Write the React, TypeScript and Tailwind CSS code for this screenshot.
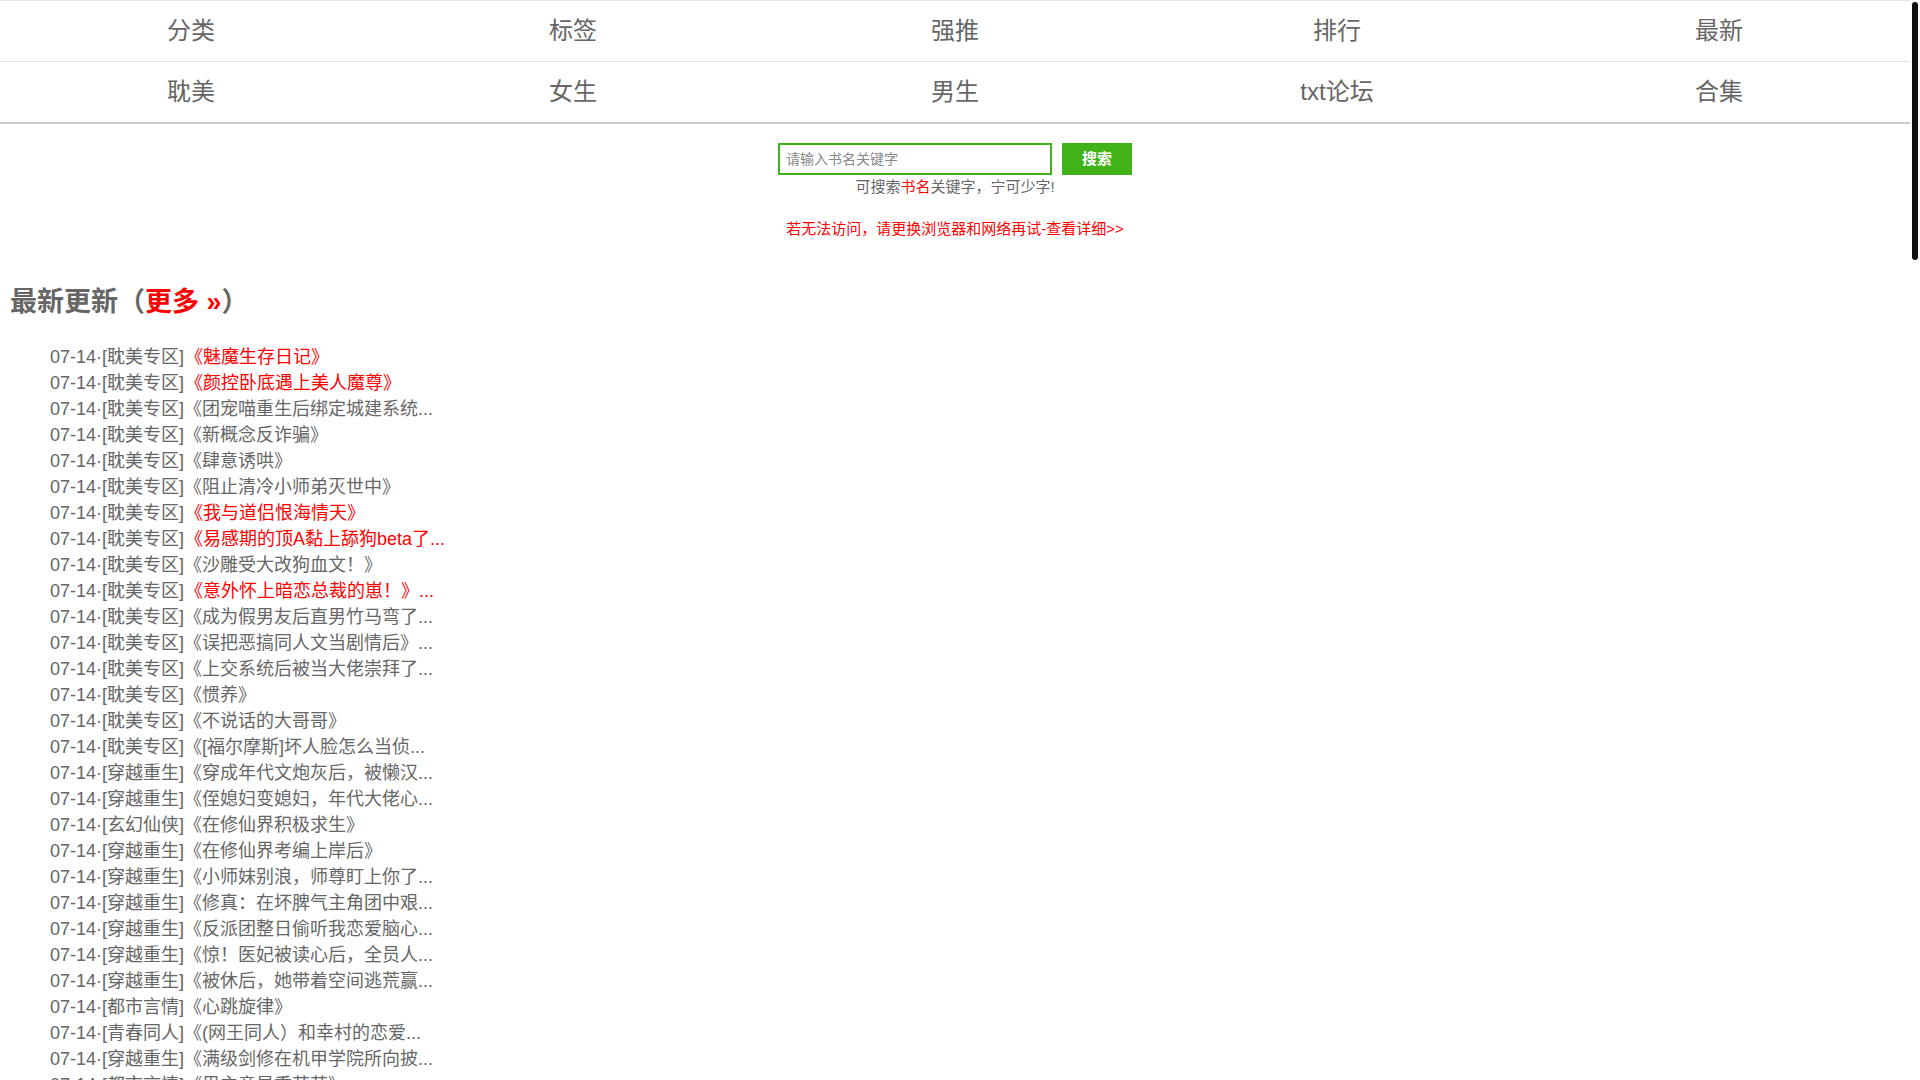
import React from "react";

type Item = { cat: string; title: string; red?: boolean };

const items: Item[] = [
  { cat: "耽美专区", title: "《魅魔生存日记》", red: true },
  { cat: "耽美专区", title: "《颜控卧底遇上美人魔尊》", red: true },
  { cat: "耽美专区", title: "《团宠喵重生后绑定城建系统..." },
  { cat: "耽美专区", title: "《新概念反诈骗》" },
  { cat: "耽美专区", title: "《肆意诱哄》" },
  { cat: "耽美专区", title: "《阻止清冷小师弟灭世中》" },
  { cat: "耽美专区", title: "《我与道侣恨海情天》", red: true },
  { cat: "耽美专区", title: "《易感期的顶A黏上舔狗beta了...", red: true },
  { cat: "耽美专区", title: "《沙雕受大改狗血文！》" },
  { cat: "耽美专区", title: "《意外怀上暗恋总裁的崽！》...", red: true },
  { cat: "耽美专区", title: "《成为假男友后直男竹马弯了..." },
  { cat: "耽美专区", title: "《误把恶搞同人文当剧情后》..." },
  { cat: "耽美专区", title: "《上交系统后被当大佬崇拜了..." },
  { cat: "耽美专区", title: "《惯养》" },
  { cat: "耽美专区", title: "《不说话的大哥哥》" },
  { cat: "耽美专区", title: "《[福尔摩斯]坏人脸怎么当侦..." },
  { cat: "穿越重生", title: "《穿成年代文炮灰后，被懒汉..." },
  { cat: "穿越重生", title: "《侄媳妇变媳妇，年代大佬心..." },
  { cat: "玄幻仙侠", title: "《在修仙界积极求生》" },
  { cat: "穿越重生", title: "《在修仙界考编上岸后》" },
  { cat: "穿越重生", title: "《小师妹别浪，师尊盯上你了..." },
  { cat: "穿越重生", title: "《修真：在坏脾气主角团中艰..." },
  { cat: "穿越重生", title: "《反派团整日偷听我恋爱脑心..." },
  { cat: "穿越重生", title: "《惊！医妃被读心后，全员人..." },
  { cat: "穿越重生", title: "《被休后，她带着空间逃荒赢..." },
  { cat: "都市言情", title: "《心跳旋律》" },
  { cat: "青春同人", title: "《(网王同人）和幸村的恋爱..." },
  { cat: "穿越重生", title: "《满级剑修在机甲学院所向披..." },
  { cat: "都市言情", title: "《男主竟是乖萌萌》" },
];

const row1 = ["分类", "标签", "强推", "排行", "最新"];
const row2 = ["耽美", "女生", "男生", "txt论坛", "合集"];

export default function App() {
  return (
    <div className="relative bg-white pr-[10px] font-['Liberation_Sans','Noto_Sans_CJK_SC',sans-serif] text-[#666]">
      <nav className="border-t border-[#e5e5e5]">
        <div className="grid grid-cols-5 border-b border-[#e0e0e0]">
          {row1.map((t) => (
            <a key={t} className="flex h-[60px] items-center justify-center text-[24px] text-[#666]">
              {t}
            </a>
          ))}
        </div>
        <div className="grid grid-cols-5 border-b-2 border-[#ccc]">
          {row2.map((t) => (
            <a key={t} className="flex h-[60px] items-center justify-center text-[24px] text-[#666]">
              {t}
            </a>
          ))}
        </div>
      </nav>

      <div className="mt-[19px] flex justify-center gap-[10px]">
        <input
          type="text"
          placeholder="请输入书名关键字"
          className="box-border h-[32px] w-[274px] border-2 border-[#41b318] bg-white px-[6px] text-[14px] text-[#333] outline-none placeholder:text-[#888]"
        />
        <button className="h-[32px] w-[70px] bg-[#41b318] text-[15px] font-bold text-white">搜索</button>
      </div>
      <p className="mt-[2px] text-center text-[15px] leading-[20px] text-[#666]">
        可搜索<span className="text-[#f00]">书名</span>关键字，宁可少字!
      </p>
      <p className="mt-[22px] text-center text-[15px] leading-[20px] text-[#f00]">
        若无法访问，请更换浏览器和网络再试-查看详细&gt;&gt;
      </p>

      <div className="px-[10px]">
        <h2 className="mt-[45px] text-[27px] font-bold leading-[36px] text-[#666]">
          最新更新（<span className="text-[#f00]">更多 »</span>）
        </h2>
        <ul className="mt-[24px] pl-[40px]">
          {items.map((it, i) => (
            <li key={i} className="whitespace-nowrap text-[18px] leading-[26px] text-[#666]">
              07-14·[{it.cat}]
              {it.red ? <span className="ml-[1px] text-[#f00]">{it.title}</span> : <span>{it.title}</span>}
            </li>
          ))}
        </ul>
      </div>

      <div className="fixed right-[2px] top-[2px] h-[258px] w-[6px] rounded-full bg-[#111]" />
    </div>
  );
}
